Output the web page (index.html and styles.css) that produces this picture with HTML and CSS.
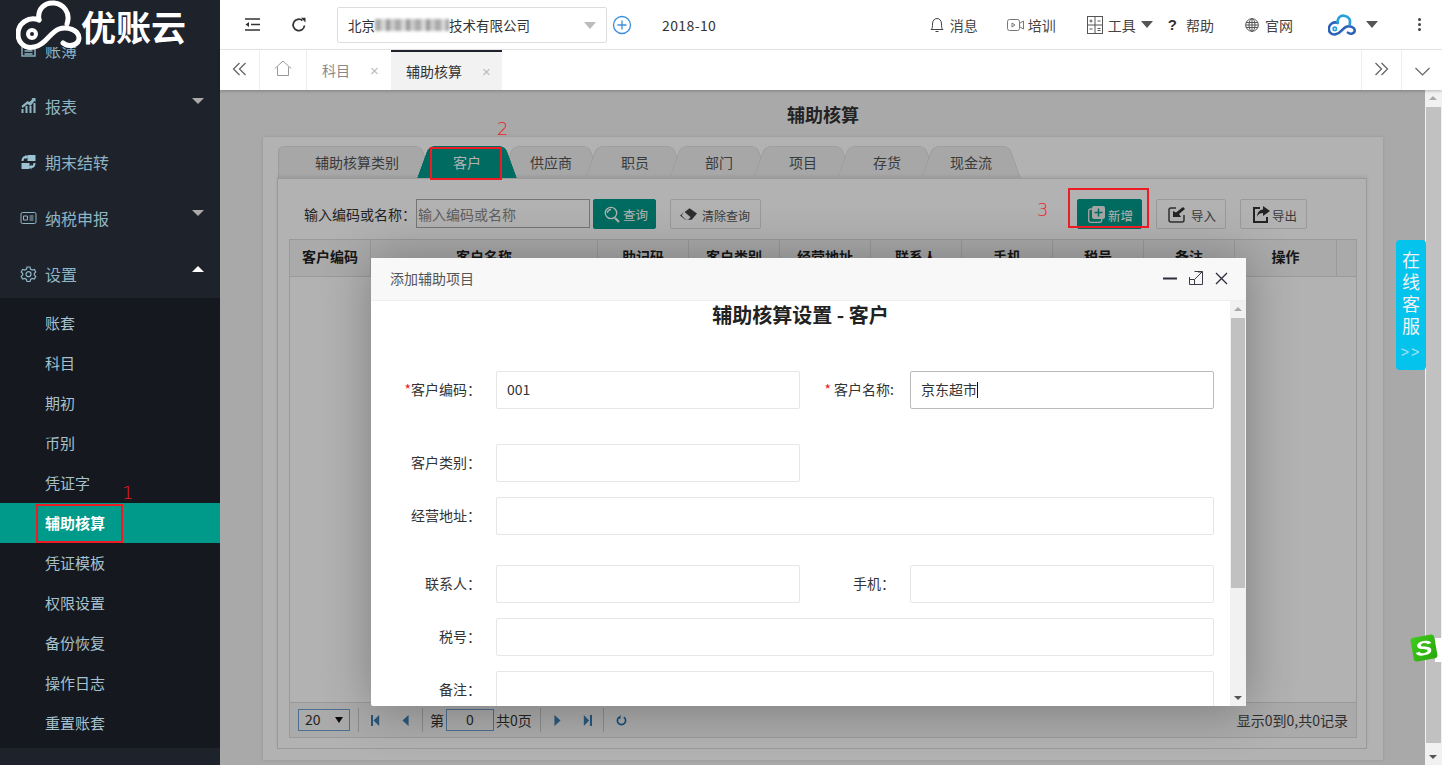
FILE: index.html
```html
<!DOCTYPE html>
<html>
<head>
  <meta name="viewport" content="width=device-width, initial-scale=1.0">
  <title>辅助核算</title>
  <link rel="stylesheet" href="styles.css">
</head>
<body>
  <aside class="sidebar">
    <div class="logo">
      <svg class="logo-mark" width="66" height="50" viewBox="15 0 66 50" fill="none" stroke="#fff" stroke-width="5" stroke-linecap="round">
        <path d="M38 20C28 16 17 23 17 34C17 43 24 49 33 47C45 45 48 33 58 29C66 26 78 30 78 38C78 45 68 48 62 43"/>
        <path d="M38 20C36 9 44 2 53 3C62 4 70 12 66 24"/>
        <circle cx="31" cy="34" r="4" stroke-width="4"/>
      </svg>
      <span class="logo-text">优账云</span>
    </div>
    <ul class="menu">
      <li class="menu-item">
        <svg class="menu-icon" width="16" height="16" viewBox="0 0 16 16" fill="none" stroke="#8fb5c4" stroke-width="1.4"><rect x="1.5" y="2" width="13" height="12"/><path d="M4 6h8M4 9h8M4 12h8"/></svg>
        账簿
      </li>
      <li class="menu-item has-sub">
        <svg class="menu-icon" width="16" height="16" viewBox="0 0 16 16" fill="#8fb5c4"><path d="M1 11h2v4H1zM5 8h2v7H5zM9 8h2v7H9zM13 5h2v10h-2zM1 8l6-5 2 1 3-3-1-1h4v4l-1-1-4 5-3-2-5 4z"/></svg>
        报表
      </li>
      <li class="menu-item">
        <svg class="menu-icon" width="16" height="16" viewBox="0 0 16 16" fill="#9cc4d4"><path d="M7 1h8v6H7zM1 9h8v6H1zM1 7c0-3 1.500-5 4-5V.5L7.500 3 5 5.500V4C4 4 3 5.500 3 7zM15 9c0 3-1.500 5-4 5v1.500L8.500 13 11 10.500V12c1 0 2-1.500 2-3z"/></svg>
        期末结转
      </li>
      <li class="menu-item has-sub">
        <svg class="menu-icon" width="16" height="12" viewBox="0 0 16 12" fill="none" stroke="#8fb5c4"><rect x="0.5" y="0.5" width="15" height="11" rx="1.500"/><path d="M3 4h4v4H3zM9 4h4M9 6h4M9 8h4" stroke-width="1"/></svg>
        纳税申报
      </li>
      <li class="menu-item has-sub open">
        <svg class="menu-icon" width="16" height="16" viewBox="0 0 16 16" fill="none" stroke="#8fb5c4" stroke-width="1.200"><path d="M6.500 1h3l.5 2 1.800 1 2-.6 1.500 2.600-1.500 1.500v1.500l1.500 1.500-1.500 2.600-2-.6-1.800 1-.5 2h-3l-.5-2-1.800-1-2 .6L.7 10.500 2.200 9V7.500L.7 6l1.500-2.600 2 .6L6 3z"/><circle cx="8" cy="8.200" r="2.500"/></svg>
        设置
      </li>
    </ul>
    <ul class="submenu">
      <li>账套</li>
      <li>科目</li>
      <li>期初</li>
      <li>币别</li>
      <li>凭证字</li>
      <li class="active">辅助核算</li>
      <li>凭证模板</li>
      <li>权限设置</li>
      <li>备份恢复</li>
      <li>操作日志</li>
      <li>重置账套</li>
    </ul>
  </aside>

  <div class="main">
    <header class="topbar">
      <div class="top-left">
        <svg width="15" height="13" viewBox="0 0 15 13" fill="none" stroke="#333" stroke-width="1.500"><path d="M0 1h15M6 6.500h9M0 12h15"/><path d="M4 4v5L.5 6.500z" fill="#333" stroke="none"/></svg>
        <svg class="refresh" width="16" height="16" viewBox="0 0 16 16" fill="none" stroke="#333" stroke-width="1.800"><path d="M13.500 8.500A5.700 5.700 0 1 1 11.500 3.500"/><path d="M10 .8h4.500v4.700z" fill="#333" stroke="none"/></svg>
        <div class="company">
          <span>北京</span><span class="blurred"></span><span>技术有限公司</span>
          <i class="company-arrow"></i>
        </div>
        <svg class="add-company" width="20" height="20" viewBox="0 0 20 20" fill="none" stroke="#3d8fdc" stroke-width="1.300"><circle cx="10" cy="10" r="8.500"/><path d="M10 5.500v9M5.500 10h9"/></svg>
        <span class="period">2018-10</span>
      </div>
      <nav class="top-right">
        <a class="link l-msg">
          <svg width="14" height="16" viewBox="0 0 14 16" fill="none" stroke="#444"><path d="M1 12.500c1.500-1 1.500-3 1.500-5.500C2.500 3.500 4.500 1.500 7 1.500S11.500 3.500 11.500 7c0 2.500 0 4.500 1.500 5.500zM5.500 14.500h3"/></svg>消息
        </a>
        <a class="link l-train">
          <svg width="17" height="14" viewBox="0 0 17 14" fill="none" stroke="#777"><rect x="0.500" y="1.500" width="12" height="11" rx="2"/><path d="M13 5l3.500-2v8L13 9M5 5l3 2-3 2z"/></svg>培训
        </a>
        <a class="link l-tool">
          <svg width="16" height="18" viewBox="0 0 16 18" fill="none" stroke="#555"><rect x="0.500" y="0.500" width="15" height="17"/><path d="M8 .5v17M.5 9h15M2.500 5h3M4 3.500v3M10.500 5h3M2.500 13h3M10.500 12.500h3M10.500 14.500h3"/></svg>工具<i class="caret"></i>
        </a>
        <a class="link l-help"><b class="qmark">?</b>帮助</a>
        <a class="link l-site">
          <svg width="14" height="14" viewBox="0 0 14 14" fill="none" stroke="#555"><circle cx="7" cy="7" r="6.300"/><ellipse cx="7" cy="7" rx="3" ry="6.300"/><path d="M1 4.500h12M.7 7h12.600M1 9.500h12M7 .7v12.600"/></svg>官网
        </a>
        <svg class="l-cloud" width="28" height="22" viewBox="15 0 66 50" fill="none" stroke="#2a62b8" stroke-width="6" stroke-linecap="round">
          <path d="M38 20C28 16 17 23 17 34C17 43 24 49 33 47C45 45 48 33 58 29C66 26 78 30 78 38C78 45 68 48 62 43"/>
          <path d="M38 20C36 9 44 2 53 3C62 4 70 12 66 24" stroke="#28a0dc"/>
          <circle cx="31" cy="34" r="4" stroke-width="4" stroke="#28a0dc"/>
        </svg>
        <i class="caret l-caret"></i>
        <span class="dots"><i></i><i></i><i></i></span>
      </nav>
    </header>

    <div class="tabbar">
      <button class="tab-btn">
        <svg width="15" height="14" viewBox="0 0 15 14" fill="none" stroke="#666" stroke-width="1.300"><path d="M7.500 1l-6 6 6 6M13.500 1l-6 6 6 6"/></svg>
      </button>
      <button class="tab-btn home">
        <svg width="18" height="16" viewBox="0 0 18 16" fill="none" stroke="#999"><path d="M.8 8.500L9 1l8.200 7.500M3.500 7v8.500h11V7"/></svg>
      </button>
      <div class="page-tab">科目<span class="close">×</span></div>
      <div class="page-tab current">辅助核算<span class="close">×</span></div>
      <div class="tabbar-space"></div>
      <button class="tab-btn">
        <svg width="15" height="14" viewBox="0 0 15 14" fill="none" stroke="#666" stroke-width="1.300"><path d="M1.500 1l6 6-6 6M7.500 1l6 6-6 6"/></svg>
      </button>
      <button class="tab-btn">
        <svg width="15" height="9" viewBox="0 0 15 9" fill="none" stroke="#666" stroke-width="1.200"><path d="M.5 1l7 7 7-7"/></svg>
      </button>
    </div>

    <div class="content-wrap">
      <div class="content">
        <h2 class="page-title">辅助核算</h2>
        <section class="panel">
          <div class="type-tabs">
            <div class="type-tab first">辅助核算类别</div>
            <div class="type-tab active">客户</div>
            <div class="type-tab">供应商</div>
            <div class="type-tab">职员</div>
            <div class="type-tab">部门</div>
            <div class="type-tab">项目</div>
            <div class="type-tab">存货</div>
            <div class="type-tab">现金流</div>
          </div>
          <div class="tab-body">
            <div class="toolbar">
              <label class="search-label">输入编码或名称：</label>
              <input class="search-input" placeholder="输入编码或名称">
              <button class="btn primary search-btn">
                <svg width="17" height="17" viewBox="0 0 17 17" fill="none" stroke="#fff" stroke-width="1.300"><circle cx="7" cy="7" r="5.700"/><path d="M11 12l4 4" stroke-width="2.200"/><path d="M3.500 7A3.500 3.500 0 0 1 7 3.500"/></svg><span>查询</span>
              </button>
              <button class="btn clear-btn">
                <svg width="17" height="13" viewBox="0 0 16 12"><path d="M9 0l7 5-5 6H5L0 7z" fill="#444"/><path d="M4 3.500l6 5-2.500 2.500H5.500L1.500 7z" fill="#fff"/></svg><span>清除查询</span>
              </button>
              <div class="toolbar-space"></div>
              <button class="btn primary add-btn">
                <svg width="17" height="17" viewBox="0 0 17 17"><rect x="0.700" y="3" width="13" height="13.300" rx="2" fill="none" stroke="#eee" stroke-width="1.300"/><rect x="4" y="0" width="13" height="13" rx="2" fill="#eee"/><path d="M10.500 2.500v8M6.500 6.500h8" stroke="#009a8a" stroke-width="1.500"/></svg><span>新增</span>
              </button>
              <button class="btn import-btn">
                <svg width="18" height="17" viewBox="0 0 18 17"><path d="M8 2H3a2 2 0 0 0-2 2v10a2 2 0 0 0 2 2h11a2 2 0 0 0 2-2V9" fill="none" stroke="#444" stroke-width="1.500"/><path d="M15 1l2 2-6 5 2 3H5V5l3 1.500z" fill="#333"/></svg><span>导入</span>
              </button>
              <button class="btn export-btn">
                <svg width="18" height="17" viewBox="0 0 18 17"><path d="M8 2H2v14h13v-5" fill="none" stroke="#333" stroke-width="2"/><path d="M11 0l7 5-7 5V7C8 7 6 8 5 11c0-4 2-7 6-7.500z" fill="#333"/></svg><span>导出</span>
              </button>
            </div>
            <div class="grid">
              <div class="grid-head">
                <div class="col c-code">客户编码</div>
                <div class="col c-name">客户名称</div>
                <div class="col c-std">助记码</div>
                <div class="col c-std">客户类别</div>
                <div class="col c-std">经营地址</div>
                <div class="col c-std">联系人</div>
                <div class="col c-std">手机</div>
                <div class="col c-std">税号</div>
                <div class="col c-std">备注</div>
                <div class="col c-op">操作</div>
                <div class="col c-rest"></div>
              </div>
              <div class="grid-body"></div>
              <div class="pager">
                <div class="pager-size">20<i></i></div>
                <span class="sep s1"></span>
                <svg class="pg-first" width="9" height="11" viewBox="0 1 11 10" preserveAspectRatio="none" fill="#3c7fb4"><path d="M0 1h2.500v10H0zM10 1v10L3 6z"/></svg>
                <svg class="pg-prev" width="7" height="11" viewBox="0 1 8 10" preserveAspectRatio="none" fill="#3c7fb4"><path d="M7.500 1v10L.5 6z"/></svg>
                <span class="sep s2"></span>
                <span class="pg-text">第</span>
                <div class="pg-num">0</div>
                <span class="pg-text">共0页</span>
                <span class="sep s3"></span>
                <svg class="pg-next" width="7" height="11" viewBox="0 1 8 10" preserveAspectRatio="none" fill="#3c7fb4"><path d="M.5 1v10L7.500 6z"/></svg>
                <svg class="pg-last" width="9" height="11" viewBox="0 1 11 10" preserveAspectRatio="none" fill="#3c7fb4"><path d="M1 1v10L7.500 6zM8.500 1H11v10H8.500z"/></svg>
                <span class="sep s4"></span>
                <svg class="pg-reload" width="11" height="11" viewBox="0 0 12 12" fill="none" stroke="#1f6fae" stroke-width="1.800"><path d="M8.500 2.300A4.500 4.500 0 1 1 3.500 2.300"/><path d="M3 0v4.500H0z" fill="#1f6fae" stroke="none" transform="translate(2 -.5)"/></svg>
                <span class="pg-info">显示0到0,共0记录</span>
              </div>
            </div>
          </div>
        </section>
      </div>
      <div class="page-scroll">
        <i class="arrow-up"></i>
        <div class="page-thumb"></div>
        <i class="arrow-down"></i>
      </div>
      <div class="mask"></div>

      <div class="modal">
        <div class="modal-head">
          <span>添加辅助项目</span>
          <div class="modal-tools">
            <svg width="14" height="14" viewBox="0 0 14 14" stroke="#2c2c3c" stroke-width="2"><path d="M0 7.500h14"/></svg>
            <svg width="14" height="14" viewBox="0 0 14 14" fill="none" stroke="#3a3a4a"><path d="M5.500 .5h8v13H.5V6M.5 8.500h5v5M5.500 8.500L13 1M9 1h4.500v4.500"/></svg>
            <svg width="13" height="13" viewBox="0 0 13 13" stroke="#2c2c3c" stroke-width="1.300"><path d="M1 1l11 11M12 1L1 12"/></svg>
          </div>
        </div>
        <div class="modal-body">
          <div class="form-wrap">
            <h3 class="form-title">辅助核算设置 - 客户</h3>
            <div class="row r1">
              <label><em>*</em>客户编码：</label>
              <input value="001">
              <label class="second name-label"><em>* </em>客户名称:</label>
              <div class="input focus">京东超市<span class="text-caret"></span></div>
            </div>
            <div class="row r2">
              <label>客户类别：</label>
              <input>
            </div>
            <div class="row r3">
              <label>经营地址：</label>
              <input class="wide">
            </div>
            <div class="row r4">
              <label>联系人：</label>
              <input>
              <label class="second">手机：</label>
              <input>
            </div>
            <div class="row r3">
              <label>税号：</label>
              <input class="wide">
            </div>
            <div class="row r3">
              <label>备注：</label>
              <input class="wide">
            </div>
          </div>
          <div class="modal-scroll">
            <i class="arrow-up"></i>
            <div class="modal-thumb"></div>
            <i class="arrow-down"></i>
          </div>
        </div>
      </div>

      <div class="kefu">
        <span class="kefu-text">在线客服</span>
        <small>&gt;&gt;</small>
      </div>
      <div class="sogou-tab"></div>
      <div class="sogou"><b>S</b></div>
    </div>
  </div>

  <!-- red marks drawn over the screenshot -->
  <div class="mark m1"></div><span class="mark-no n1">1</span>
  <div class="mark m2"></div><span class="mark-no n2">2</span>
  <div class="mark m3"></div><span class="mark-no n3">3</span>
</body>
</html>
```

FILE: styles.css
```css
* {
  box-sizing: border-box;
}

html, body {
  margin: 0;
  height: 765px;
  overflow: hidden;
}

body {
  position: relative;
  display: flex;
  background-color: #fff;
  color: #333;
  font-family: "Noto Sans CJK SC", "Liberation Sans", sans-serif;
  font-size: 14px;
}

ul {
  list-style: none;
  margin: 0;
  padding: 0;
}

i {
  display: block;
  font-style: normal;
}

button, input {
  font-family: inherit;
}

/* sidebar */
.sidebar {
  position: relative;
  width: 220px;
  flex-shrink: 0;
  height: 765px;
  padding-top: 23px;
  background-color: #1e222b;
  color: #8fb5c4;
  overflow: hidden;
}

.logo {
  position: absolute;
  top: 0;
  left: 0;
  z-index: 2;
  display: flex;
  align-items: flex-start;
  width: 100%;
  height: 47px;
  padding-left: 16px;
  color: #fff;
  background-color: #1e222b;
}

.logo-mark {
  flex-shrink: 0;
}

.logo-text {
  margin-left: -1px;
  margin-top: 3px;
  font-size: 35px;
  line-height: 46px;
  font-weight: 700;
}

.menu-item {
  position: relative;
  display: flex;
  align-items: center;
  gap: 8px;
  height: 56px;
  padding: 0 0 2px 20px;
  font-size: 16px;
}

.menu-icon {
  width: 17px;
  flex-shrink: 0;
}

.menu-item.has-sub::after {
  content: "";
  position: absolute;
  top: 19px;
  right: 16px;
  border-left: 6px solid transparent;
  border-right: 6px solid transparent;
  border-top: 6px solid #aaa;
}

.menu-item.open::after {
  border-top: 0;
  border-bottom: 6px solid #fff;
}

.submenu {
  margin-top: -5px;
  padding: 5px 0;
  background-color: #15181e;
  color: #a5c2ce;
}

.submenu li {
  height: 40px;
  padding-left: 45px;
  font-size: 15px;
  line-height: 40px;
}

.submenu li.active {
  background-color: #009a8a;
  color: #fff;
  font-weight: 700;
}

/* top bar */
.main {
  flex: 1;
  min-width: 0;
  display: flex;
  flex-direction: column;
}

.topbar {
  display: flex;
  justify-content: space-between;
  align-items: center;
  height: 50px;
  flex-shrink: 0;
  border-bottom: 1px solid #eee;
}

.top-left {
  display: flex;
  align-items: center;
  padding-left: 25px;
}

.refresh {
  margin-left: 31px;
}

.company {
  position: relative;
  display: flex;
  align-items: center;
  width: 270px;
  height: 36px;
  margin-left: 30px;
  padding-left: 10px;
  border: 1px solid #ddd;
  border-radius: 2px;
  font-size: 13.500px;
}

.blurred {
  width: 74px;
  height: 12px;
  background: repeating-linear-gradient(90deg, #aaa 0 6px, #d8d8d8 6px 11px, #999 11px 15px, #ccc 15px 20px);
  filter: blur(1.500px);
}

.company-arrow {
  position: absolute;
  top: 14px;
  right: 10px;
  border-left: 6px solid transparent;
  border-right: 6px solid transparent;
  border-top: 7px solid #bbb;
}

.add-company {
  margin-left: 5px;
}

.period {
  margin-left: 30px;
  letter-spacing: 0.400px;
}

.top-right {
  display: flex;
  align-items: center;
  font-size: 14px;
  color: #444;
  padding-right: 21px;
}

.link {
  display: flex;
  align-items: center;
  gap: 6px;
}

.l-msg { margin-right: 29px; }
.l-train { margin-right: 31px; gap: 4px; }
.l-tool { margin-right: 15px; gap: 5px; }
.l-help { margin-right: 31px; gap: 9px; }
.l-site { margin-right: 35px; gap: 6px; }
.l-caret { margin: 0 40px 0 10px; }

.caret {
  border-left: 6px solid transparent;
  border-right: 6px solid transparent;
  border-top: 7px solid #555;
}

.qmark {
  font-size: 15px;
  color: #333;
  font-family: "Liberation Sans", sans-serif;
}

.dots i {
  width: 3px;
  height: 3px;
  margin: 2px 0;
  background-color: #444;
  border-radius: 50%;
}

/* page tabs */
.tabbar {
  position: relative;
  display: flex;
  height: 40px;
  flex-shrink: 0;
  background-color: #fff;
  box-shadow: 0 1px 3px rgba(0, 0, 0, 0.25);
  z-index: 3;
}

.tab-btn {
  width: 40px;
  padding: 0;
  background: none;
  border: 0;
  border-right: 1px solid #eee;
}

.tab-btn.home {
  width: 47px;
}

.tabbar-space {
  flex: 1;
  border-right: 1px solid #eee;
}

.tabbar .tab-btn:last-child {
  border-right: 0;
}

.page-tab {
  display: flex;
  align-items: center;
  padding-left: 15px;
  width: 84px;
  color: #888;
  font-size: 14px;
  gap: 20px;
}

.page-tab.current {
  width: 111px;
  background-color: #f2f2f2;
  border-top: 2px solid #1e222b;
  color: #333;
}

.close {
  color: #bbb;
  font-size: 15px;
  font-family: "Liberation Sans", sans-serif;
}

/* content under the mask */
.content-wrap {
  position: relative;
  flex: 1;
  display: flex;
  min-height: 0;
  overflow: hidden;
}

.content {
  flex: 1;
  isolation: isolate;
  background-color: #f2f2f2;
  padding: 0 42px 0 43px;
  min-width: 0;
}

.page-title {
  margin: 0;
  height: 47px;
  text-align: center;
  font-size: 18px;
  line-height: 48px;
  color: #333;
}

.panel {
  height: 623px;
  padding: 9px 16px 11px 14px;
  background-color: #fff;
  box-shadow: 0 0 3px rgba(0, 0, 0, 0.12);
}

.type-tabs {
  display: flex;
  height: 32px;
  padding-left: 1px;
}

.type-tab {
  position: relative;
  width: 100px;
  margin-left: -16px;
  text-align: center;
  font-size: 14px;
  line-height: 32px;
  color: #555;
  z-index: 0;
}

.type-tab::before,
.type-tab::after {
  content: "";
  position: absolute;
  top: 0;
  bottom: 0;
  width: 55%;
  background-color: #f0f0f0;
  border-top: 1px solid #e2e2e2;
  z-index: -1;
  transform-origin: bottom;
}

.type-tab::before {
  left: 0;
  border-left: 1px solid #ddd;
  border-radius: 6px 0 0 0;
  transform: skewX(-20deg);
}

.type-tab::after {
  right: 0;
  border-right: 1px solid #ddd;
  border-radius: 0 6px 0 0;
  transform: skewX(20deg);
}

.type-tab.first {
  width: 155px;
  margin-left: 0;
  padding-left: 3px;
}

.type-tab.first::before {
  transform: none;
}

.type-tab.active {
  z-index: 1;
  color: #fff;
}

.type-tab.active::before,
.type-tab.active::after {
  background-color: #009a8a;
  border-color: #009a8a;
}

.tab-body {
  position: relative;
  height: 571px;
  padding: 0 9px 10px 11px;
  background-color: #fff;
  border: 1px solid #ddd;
  box-shadow: 0 -2px 3px rgba(0, 0, 0, 0.08);
}

.toolbar {
  display: flex;
  align-items: flex-start;
  height: 60px;
  padding: 20px 50px 0 15px;
}

.search-label {
  width: 112px;
  line-height: 30px;
  font-size: 14px;
}

.search-input {
  width: 174px;
  height: 29px;
  padding: 0 0 0 1px;
  border: 1px solid #aaa;
  font-size: 14px;
}

.search-input::placeholder {
  color: #888;
}

.btn {
  display: flex;
  align-items: center;
  gap: 2px;
  height: 30px;
  margin-left: 14px;
  padding: 0 0 0 11px;
  border: 1px solid #ddd;
  border-radius: 2px;
  background-color: #fff;
  color: #555;
  font-size: 12.500px;
  white-space: nowrap;
}

.btn span {
  margin-top: 3px;
}

.btn.primary {
  background-color: #009a8a;
  border-color: #009a8a;
  color: #fff;
}

.search-btn {
  width: 63px;
  margin-left: 3px;
  padding-left: 10px;
}

.search-btn span {
  margin-top: 0;
}

.clear-btn {
  width: 91px;
  padding-left: 9px;
  gap: 5px;
  font-size: 12px;
}

.toolbar-space {
  flex: 1;
}

.add-btn {
  width: 65px;
  margin-left: 0;
  padding-left: 10px;
  gap: 3px;
}

.import-btn {
  width: 70px;
  gap: 5px;
}

.export-btn {
  width: 67px;
}

.grid {
  display: flex;
  flex-direction: column;
  height: 499px;
  border: 1px solid #ddd;
}

.grid-head {
  display: flex;
  height: 37px;
  flex-shrink: 0;
  background-color: #f4f4f4;
  border-bottom: 1px solid #ddd;
}

.col {
  flex-shrink: 0;
  border-right: 1px solid #ddd;
  text-align: center;
  font-weight: 700;
  line-height: 33px;
  color: #222;
  font-size: 14px;
}

.c-code { width: 81px; }
.c-name { width: 227px; }
.c-std { width: 91px; }
.c-op { width: 102px; }
.c-rest { width: 20px; border-right: 0; }

.grid-body {
  flex: 1;
}

.pager {
  display: flex;
  align-items: center;
  height: 35px;
  flex-shrink: 0;
  padding: 0 8px;
  background-color: #f4f4f4;
  border-top: 1px solid #ddd;
  font-size: 14px;
}

.pager-size {
  position: relative;
  width: 52px;
  height: 22px;
  padding-left: 6px;
  border: 1px solid #6f9fd0;
  line-height: 19px;
}

.pager-size i {
  position: absolute;
  top: 7px;
  right: 6px;
  border-left: 4px solid transparent;
  border-right: 4px solid transparent;
  border-top: 6px solid #111;
}

.sep {
  width: 1px;
  height: 24px;
  background-color: #c8c8c8;
}

.s1 { margin: 0 12px 0 8px; }
.s2 { margin: 0 7px 0 13px; }
.s3 { margin: 0 13px 0 8px; }
.s4 { margin: 0 12px 0 11px; }

.pg-prev {
  margin-left: 22px;
}

.pg-num {
  width: 48px;
  height: 22px;
  margin: 0 2px;
  text-align: center;
  border: 1px solid #6f9fd0;
  line-height: 19px;
}

.pg-last {
  margin-left: 22px;
}

.pg-text {
  font-size: 14px;
}

.pg-info {
  margin-left: auto;
  font-size: 14px;
  color: #444;
}

.page-scroll {
  position: relative;
  width: 17px;
  flex-shrink: 0;
  background-color: #f1f1f1;
  padding: 17px 1px;
}

.page-thumb {
  height: 636px;
  background-color: #c1c1c1;
}

.arrow-up,
.arrow-down {
  position: absolute;
  left: 4px;
  border-left: 4px solid transparent;
  border-right: 4px solid transparent;
}

.arrow-up {
  top: 6px;
  border-bottom: 4px solid #aaa;
}

.arrow-down {
  bottom: 6px;
  border-top: 4px solid #555;
}

.mask {
  position: absolute;
  top: 0;
  left: 0;
  right: 17px;
  bottom: 0;
  background-color: rgba(0, 0, 0, 0.3);
}

/* dialog */
.modal {
  position: absolute;
  top: 168px;
  left: 151px;
  display: flex;
  flex-direction: column;
  width: 875px;
  height: 448px;
  background-color: #fff;
  border-radius: 2px;
  box-shadow: 1px 1px 50px rgba(0, 0, 0, 0.3);
}

.modal-head {
  display: flex;
  justify-content: space-between;
  align-items: center;
  height: 43px;
  flex-shrink: 0;
  padding: 0 18px 2px 19px;
  background-color: #f8f8f8;
  border-bottom: 1px solid #eee;
  color: #555;
  font-size: 14px;
}

.modal-tools {
  display: flex;
  align-items: center;
  gap: 12px;
}

.modal-body {
  position: relative;
  display: flex;
  flex: 1;
  min-height: 0;
  overflow: hidden;
}

.form-wrap {
  flex: 1;
  min-width: 0;
}

.form-title {
  margin: 0 0 41px;
  height: 29px;
  text-align: center;
  font-size: 20px;
  line-height: 28px;
  color: #222;
}

.row {
  display: grid;
  grid-template-columns: 125px 304px 110px 304px;
  align-items: center;
  height: 38px;
}

.r2 { margin-top: 35px; }
.r3 { margin-top: 15px; }
.r4 { margin-top: 30px; }

.row label {
  padding: 0 15px 3px 0;
  text-align: right;
  font-size: 14px;
  color: #333;
}

.row label.name-label {
  padding-right: 16px;
}

.row em {
  color: #e22;
  font-style: normal;
}

.row input,
.row .input {
  height: 38px;
  padding: 0 10px 2px;
  border: 1px solid #e6e6e6;
  border-radius: 2px;
  font-size: 14px;
  color: #333;
  line-height: 34px;
  outline: none;
}

.row .focus {
  border-color: #bbb;
}

.row .wide {
  grid-column: 2 / 5;
}

.text-caret {
  display: inline-block;
  width: 1px;
  height: 16px;
  background-color: #111;
  vertical-align: -3px;
}

.modal-scroll {
  position: relative;
  width: 16px;
  flex-shrink: 0;
  padding: 17px 1px;
  background-color: #f1f1f1;
}

.modal-thumb {
  height: 270px;
  background-color: #c1c1c1;
}

.kefu {
  position: absolute;
  top: 150px;
  left: 1176px;
  display: flex;
  flex-direction: column;
  align-items: center;
  width: 30px;
  height: 130px;
  padding-top: 11px;
  background-color: #04c4ee;
  border-radius: 4px;
  color: #f2f2f2;
}

.kefu-text {
  writing-mode: vertical-rl;
  text-orientation: upright;
  font-size: 18px;
  letter-spacing: 4px;
  line-height: 20px;
}

.kefu small {
  margin-top: 5px;
  font-family: "Liberation Sans", sans-serif;
  font-size: 14px;
  letter-spacing: 2px;
  line-height: 16px;
  color: #a6e4f4;
}

.sogou-tab {
  position: absolute;
  top: 548px;
  left: 1215px;
  width: 7px;
  height: 24px;
  background-color: #fff;
}

.sogou {
  position: absolute;
  top: 546px;
  left: 1192px;
  width: 24px;
  height: 24px;
  background: linear-gradient(135deg, #3fcb1c, #29a80c);
  border-radius: 3px;
  transform: rotate(-10deg);
  color: #fff;
  text-align: center;
  font-family: "Liberation Sans", sans-serif;
  font-size: 20px;
  font-style: italic;
  line-height: 24px;
}

.sogou b {
  display: inline-block;
  transform: scaleX(1.300);
}

/* red marks */
.mark {
  position: absolute;
  border: 2px solid #ed1c24;
  z-index: 5;
}

.m1 { left: 36px; top: 504px; width: 87px; height: 39px; }
.m2 { left: 430px; top: 147px; width: 72px; height: 33px; }
.m3 { left: 1068px; top: 188px; width: 81px; height: 40px; }

.mark-no {
  position: absolute;
  z-index: 5;
  color: #ed1c24;
  font-size: 18px;
  line-height: 20px;
  font-family: "DejaVu Sans", sans-serif;
  font-weight: 200;
}

.n1 { left: 122px; top: 483px; }
.n2 { left: 497px; top: 119px; }
.n3 { left: 1037px; top: 200px; }
```
